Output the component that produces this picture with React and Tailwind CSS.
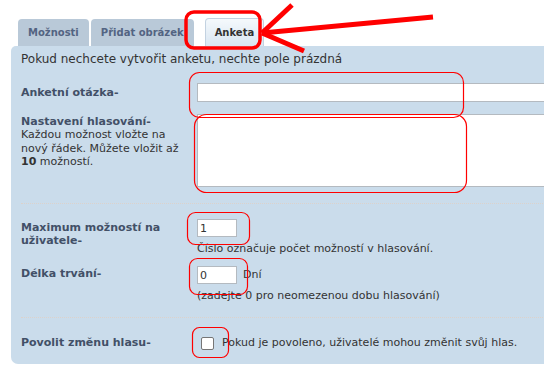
import React from 'react';

const label = "text-[#425067] font-bold";

function Tab({ children, active }) {
  if (active) {
    return (
      <div className="h-[28px] px-[9px] flex items-center rounded-t-[4px] border border-b-0 border-[#c3d2e1] bg-gradient-to-b from-[#f5f9fc] to-[#d9e6f2] text-[10px] font-bold text-[#333]">
        {children}
      </div>
    );
  }
  return (
    <div className="h-[27px] px-[10px] flex items-center rounded-t-[4px] bg-[#b9c9d8] text-[10px] font-bold text-[#536482]">
      {children}
    </div>
  );
}

function Annotations() {
  return (
    <svg className="absolute inset-0 pointer-events-none" width="544" height="369">
      <g fill="none" stroke="#ff0000" strokeWidth="1.2">
        <rect x="189.5" y="72.5" width="274" height="45" rx="10" />
        <rect x="194.5" y="114.5" width="272" height="78" rx="12" />
        <rect x="187.5" y="212.5" width="62" height="32" rx="8" />
        <rect x="189.5" y="258.5" width="58" height="36" rx="8" />
        <rect x="192.5" y="327.5" width="36" height="30" rx="7" />
      </g>
      <rect x="186" y="12" width="74" height="36" rx="8" fill="none" stroke="#ff0000" strokeWidth="3.5" />
      <g stroke="#ff0000" strokeWidth="5" strokeLinecap="butt">
        <line x1="262" y1="33" x2="433" y2="17" />
        <line x1="262" y1="33" x2="292" y2="5" />
        <line x1="262" y1="33" x2="304" y2="51" />
      </g>
    </svg>
  );
}

export default function App() {
  return (
    <div className="relative w-[544px] h-[369px] overflow-hidden bg-white font-['DejaVu_Sans','Verdana',sans-serif] text-[11px] leading-[13px] text-[#333]">
      <div className="flex items-end pl-[18px] pt-[18px] h-[46px]">
        <Tab>Možnosti</Tab>
        <div className="ml-[2px]"><Tab>Přidat obrázek</Tab></div>
        <div className="ml-[11px]"><Tab active>Anketa</Tab></div>
      </div>

      <div className="ml-[11px] w-[600px] h-[318px] bg-[#cadceb] rounded-tl-[5px] rounded-bl-[7px] pl-[10px] pt-[6px]">
        <p className="text-[12px] leading-[14px]">Pokud nechcete vytvořit anketu, nechte pole prázdná</p>

        <div className="flex mt-[17px]">
          <div className={`w-[176px] pt-[3px] ${label}`}>Anketní otázka-</div>
          <div className="w-[400px] h-[19px] bg-white border border-[#b4bac0]"></div>
        </div>

        <div className="flex mt-[12px]">
          <div className="w-[176px] pr-[12px] pt-[1px] leading-[13.4px]">
            <span className={label}>Nastavení hlasování-</span>
            <br />
            Každou možnost vložte na nový řádek. Můžete vložit až <b>10</b> možností.
          </div>
          <div className="w-[400px] h-[73px] bg-white border border-[#b4bac0]"></div>
        </div>

        <div className="mt-[16px] mr-[10px] border-t border-dotted border-[#dcd2cb]"></div>

        <div className="flex mt-[15px]">
          <div className={`w-[176px] pt-[2px] pr-[30px] ${label}`}>Maximum možností na uživatele-</div>
          <div>
            <div className="w-[40px] h-[18px] bg-white border border-[#b4bac0] px-[2px] flex items-center">1</div>
            <p className="mt-[5px]">Číslo označuje počet možností v hlasování.</p>
          </div>
        </div>

        <div className="flex mt-[11px]">
          <div className={`w-[176px] pt-[1px] ${label}`}>Délka trvání-</div>
          <div>
            <div className="flex items-start">
              <div className="w-[40px] h-[18px] bg-white border border-[#b4bac0] px-[2px] flex items-center">0</div>
              <span className="ml-[6px] pt-[2px]">Dní</span>
            </div>
            <p className="mt-[5px]">(zadejte 0 pro neomezenou dobu hlasování)</p>
          </div>
        </div>

        <div className="mt-[15px] mr-[10px] border-t border-dotted border-[#dcd2cb]"></div>

        <div className="flex mt-[18px]">
          <div className={`w-[176px] ${label}`}>Povolit změnu hlasu-</div>
          <div className="flex items-start">
            <span className="ml-[4px] mt-[1px] w-[13px] h-[13px] bg-white border border-[#767676] rounded-[2px]"></span>
            <span className="ml-[8px]">Pokud je povoleno, uživatelé mohou změnit svůj hlas.</span>
          </div>
        </div>
      </div>

      <Annotations />
    </div>
  );
}
